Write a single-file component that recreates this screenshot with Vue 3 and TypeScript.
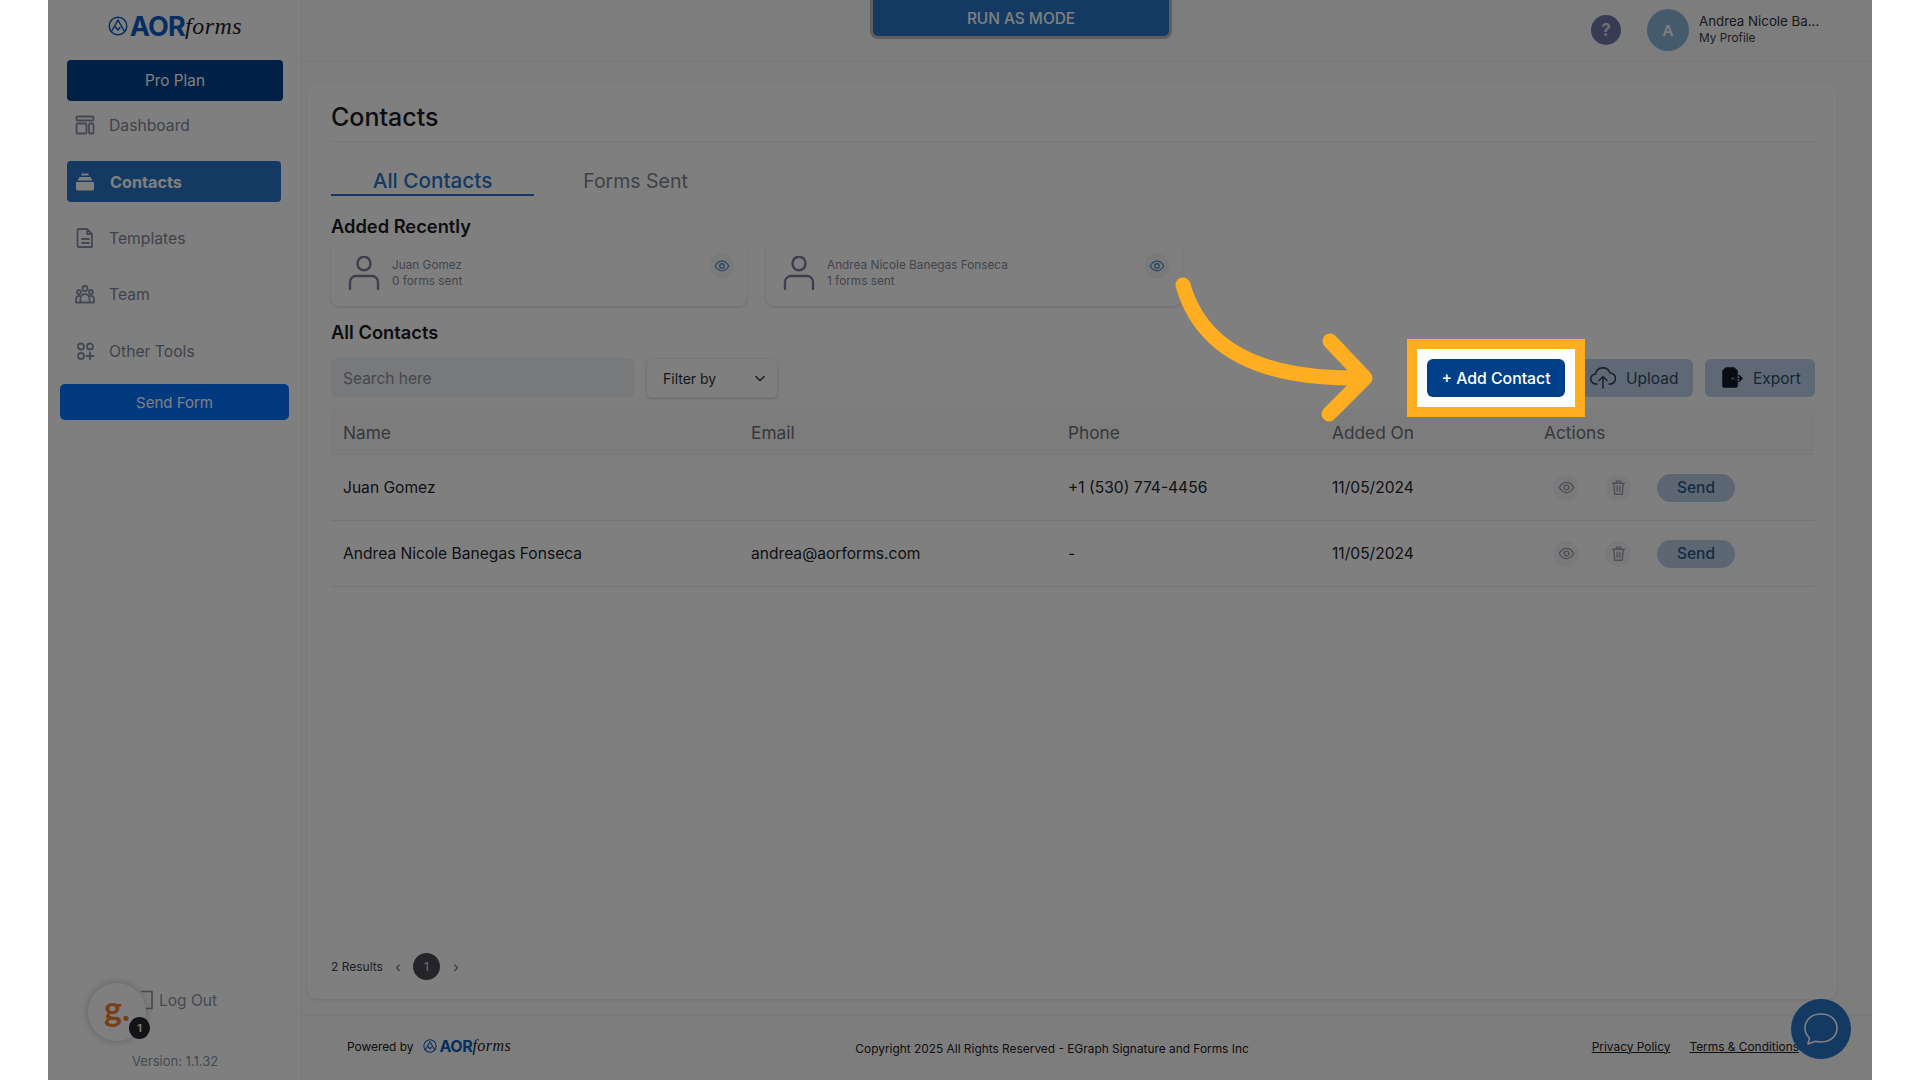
<script setup lang="ts">
interface NavItem {
  label: string
  active?: boolean
  shapes: string
}
interface ContactRow {
  name: string
  email: string
  phone: string
  added: string
}

const nav: NavItem[] = [
  { label: 'Dashboard', shapes: 'M2.500 1.500h15a1 1 0 0 1 1 1v2a1 1 0 0 1-1 1h-15a1 1 0 0 1-1-1v-2a1 1 0 0 1 1-1zM2.500 8.500h8a1 1 0 0 1 1 1v8a1 1 0 0 1-1 1h-8a1 1 0 0 1-1-1v-8a1 1 0 0 1 1-1zM15 8.500h2.500a1 1 0 0 1 1 1v8a1 1 0 0 1-1 1H15a1 1 0 0 1-1-1v-8a1 1 0 0 1 1-1z' },
  { label: 'Contacts', active: true, shapes: '' },
  { label: 'Templates', shapes: 'M4 1h8l5 5v13H4a1.500 1.500 0 0 1-1.500-1.500V2.500A1.500 1.500 0 0 1 4 1zM12 1v5h5M7 11h7M7 15h7' },
  { label: 'Team', shapes: 'M10 3.500m-2.500 0a2.500 2.500 0 1 0 5 0a2.500 2.500 0 1 0-5 0M4 7m-2 0a2 2 0 1 0 4 0a2 2 0 1 0-4 0M16 7m-2 0a2 2 0 1 0 4 0a2 2 0 1 0-4 0M1 17v-3a3 3 0 0 1 4-3M19 17v-3a3 3 0 0 0-4-3M5.500 17v-3.500a4.500 4.500 0 0 1 9 0V17M1 17.500h18' },
  { label: 'Other Tools', shapes: 'M6 5.500m-3 0a3 3 0 1 0 6 0a3 3 0 1 0-6 0M15 5.500m-3 0a3 3 0 1 0 6 0a3 3 0 1 0-6 0M6 15m-3 0a3 3 0 1 0 6 0a3 3 0 1 0-6 0M15 11.500v7M11.500 15h7' },
]

const recent = [
  { name: 'Juan Gomez', sent: '0 forms sent' },
  { name: 'Andrea Nicole Banegas Fonseca', sent: '1 forms sent' },
]

const rows: ContactRow[] = [
  { name: 'Juan Gomez', email: '', phone: '+1 (530) 774-4456', added: '11/05/2024' },
  { name: 'Andrea Nicole Banegas Fonseca', email: 'andrea@aorforms.com', phone: '-', added: '11/05/2024' },
]
</script>

<template>
  <div class="stage">
    <aside class="sidebar">
      <div class="logo">
        <svg class="logo-mark" viewBox="0 0 20 20" width="20" height="20">
          <circle cx="10" cy="10" r="8.800" />
          <path d="M3.500 15.500 10 4l6.500 11.500M7 10.500l3 3.500 2-2.500" />
        </svg>
        <span class="logo-aor">AOR</span><span class="logo-forms">forms</span>
      </div>
      <div class="plan">Pro Plan</div>
      <nav class="nav">
        <div v-for="item in nav" :key="item.label" class="nav-row" :class="{ active: item.active }">
          <svg v-if="item.active" class="nav-icon" viewBox="0 0 20 20" width="20" height="20">
            <path class="solid" d="M6.500 1.500h7v2h-7zM4.500 5h11l2 3.500h-15zM1 10h18v7a1.500 1.500 0 0 1-1.500 1.500h-15A1.500 1.500 0 0 1 1 17z" />
          </svg>
          <svg v-else class="nav-icon" viewBox="0 0 20 20" width="20" height="20">
            <path :d="item.shapes" />
          </svg>
          <span>{{ item.label }}</span>
        </div>
      </nav>
      <div class="send-form">Send Form</div>
      <div class="side-foot">
        <div class="logout">
          <svg viewBox="0 0 12 20" width="12" height="20">
            <path d="M1 1.500h10v17H5" />
          </svg>
          <span>Log Out</span>
        </div>
        <div class="version">Version: 1.1.32</div>
      </div>
    </aside>

    <main class="main">
      <header class="topbar">
        <div class="run-as">RUN AS MODE</div>
        <div class="help">?</div>
        <div class="avatar">A</div>
        <div class="me">
          <div class="me-name">Andrea Nicole Ba...</div>
          <div class="me-link">My Profile</div>
        </div>
      </header>

      <section class="card">
        <h1 class="title">Contacts</h1>
        <div class="tabs">
          <div class="tab on">All Contacts</div>
          <div class="tab">Forms Sent</div>
        </div>

        <h2 class="sub first">Added Recently</h2>
        <div class="recent">
          <div v-for="person in recent" :key="person.name" class="mini">
            <svg class="person" viewBox="0 0 32 34" width="32" height="34">
              <ellipse cx="16" cy="7.500" rx="6.500" ry="6.800" />
              <path d="M2 33v-7a6 6 0 0 1 6-6h16a6 6 0 0 1 6 6v7" />
            </svg>
            <div class="mini-text">
              <div>{{ person.name }}</div>
              <div>{{ person.sent }}</div>
            </div>
            <span class="round eye-blue">
              <svg viewBox="0 0 20 20" width="16" height="16">
                <path d="M1.500 10C4 5.500 7 4 10 4s6 1.500 8.500 6C16 14.500 13 16 10 16s-6-1.500-8.500-6z" />
                <circle cx="10" cy="10" r="2.800" />
              </svg>
            </span>
          </div>
        </div>

        <h2 class="sub second">All Contacts</h2>
        <div class="toolbar">
          <div class="search">Search here</div>
          <div class="filter">
            <span>Filter by</span>
            <svg viewBox="0 0 12 8" width="10" height="7">
              <path d="M1 1.500 6 6.500l5-5" />
            </svg>
          </div>
          <div class="spot"><div class="add">+ Add Contact</div></div>
          <div class="soft upload">
            <svg viewBox="0 0 26 24" width="26" height="24">
              <path d="M7 18H6a5 5 0 0 1-.5-10A7.500 7.500 0 0 1 20 7a5.500 5.500 0 0 1 0 11h-1M13 22V11M9 14.500 13 10.500l4 4" />
            </svg>
            <span>Upload</span>
          </div>
          <div class="soft export">
            <svg viewBox="0 0 22 22" width="22" height="22">
              <path class="solid" d="M5 1h8l3 3v6h-6v3h6v6a1 1 0 0 1-1 1H3a1 1 0 0 1-1-1V4z" />
              <path d="M13 11.500h8M18 8.500l3 3-3 3" />
            </svg>
            <span>Export</span>
          </div>
        </div>

        <div class="grid head">
          <span>Name</span><span>Email</span><span>Phone</span><span>Added On</span><span>Actions</span>
        </div>
        <div v-for="row in rows" :key="row.name" class="grid row">
          <span>{{ row.name }}</span>
          <span>{{ row.email }}</span>
          <span>{{ row.phone }}</span>
          <span>{{ row.added }}</span>
          <div class="actions">
            <span class="round">
              <svg viewBox="0 0 20 20" width="17" height="17">
                <path d="M1.500 10C4 5.500 7 4 10 4s6 1.500 8.500 6C16 14.500 13 16 10 16s-6-1.500-8.500-6z" />
                <circle cx="10" cy="10" r="2.800" />
              </svg>
            </span>
            <span class="round">
              <svg viewBox="0 0 20 20" width="17" height="17">
                <path d="M3 5h14M7.500 5V2.500h5V5M4.500 5l1 13h9l1-13M8.500 8.500v6M11.500 8.500v6" />
              </svg>
            </span>
            <span class="send">Send</span>
          </div>
        </div>

        <div class="pager">
          <span>2 Results</span>
          <span class="chev">‹</span>
          <span class="page">1</span>
          <span class="chev">›</span>
        </div>
      </section>

      <footer class="footer">
        <div class="powered">
          <span>Powered by</span>
          <div class="logo small">
            <svg class="logo-mark" viewBox="0 0 20 20" width="14" height="14">
              <circle cx="10" cy="10" r="8.800" />
              <path d="M3.500 15.500 10 4l6.500 11.500M7 10.500l3 3.500 2-2.500" />
            </svg>
            <span class="logo-aor">AOR</span><span class="logo-forms">forms</span>
          </div>
        </div>
        <div class="copy">Copyright 2025 All Rights Reserved - EGraph Signature and Forms Inc</div>
        <div class="legal">
          <a>Privacy Policy</a>
          <a>Terms &amp; Conditions</a>
        </div>
      </footer>
    </main>

    <div class="g-badge">
      <span class="g-letter">g.</span>
      <span class="g-count">1</span>
    </div>
    <div class="chat">
      <svg viewBox="0 0 36 34" width="36" height="34">
        <path d="M18 2c9 0 16 5.500 16 14s-7 14-16 14c-2 0-4-.3-5.500-.8L5 32l1.500-6C3.500 23.500 2 20 2 16 2 7.500 9 2 18 2z" />
      </svg>
    </div>

    <div class="dim"></div>
    <svg class="arrow" viewBox="0 0 210 160" width="210" height="160">
      <path d="M13 15C30 75 85 110 191 108M160 71l35 37-36 36" />
    </svg>
  </div>
</template>

<style scoped>
.stage {
  position: relative;
  width: 1824px;
  height: 1080px;
  margin: 0 auto;
  display: flex;
  overflow: hidden;
  background: #fff;
  font-family: Inter, "Open Sans", sans-serif;
  color: #1a1a1f;
}
svg {
  fill: none;
  stroke: currentColor;
  stroke-width: 1.6;
  stroke-linecap: round;
  stroke-linejoin: round;
  flex: none;
}
svg .solid {
  fill: currentColor;
}

/* sidebar */
.sidebar {
  width: 254px;
  flex: none;
  box-sizing: border-box;
  padding-left: 19px;
  display: flex;
  flex-direction: column;
  border-right: 1px solid #f0f0f0;
}
.logo {
  height: 60px;
  display: flex;
  align-items: center;
  justify-content: center;
  width: 216px;
  padding-bottom: 8px;
  box-sizing: border-box;
}
.logo-mark {
  color: #0a5ec2;
  margin-right: 2px;
  stroke-width: 1.500;
}
.logo-aor {
  color: #0a5ec2;
  font-size: 27px;
  font-weight: 700;
  letter-spacing: -0.8px;
}
.logo-forms {
  font-family: "Liberation Serif", serif;
  font-style: italic;
  font-size: 24px;
  color: #222;
  letter-spacing: 0.5px;
}
.logo.small {
  width: auto;
  height: 20px;
  padding: 0;
  margin-left: 10px;
}
.logo.small .logo-aor {
  font-size: 16px;
  letter-spacing: -0.4px;
}
.logo.small .logo-forms {
  font-size: 16px;
}
.plan {
  width: 216px;
  height: 41px;
  border-radius: 4px;
  background: #02408c;
  color: #fff;
  font-size: 15.300px;
  display: flex;
  align-items: center;
  justify-content: center;
}
.nav {
  display: flex;
  flex-direction: column;
  gap: 15.5px;
  margin-top: 3.5px;
}
.nav-row {
  width: 214px;
  height: 41px;
  box-sizing: border-box;
  padding-left: 8px;
  display: flex;
  align-items: center;
  gap: 14px;
  border-radius: 4px;
  font-size: 15.700px;
  color: #7e8597;
}
.nav-icon {
  color: #8a91a8;
  stroke-width: 1.800;
}
.nav-row.active {
  background: #2874c6;
  color: #fff;
  font-weight: 700;
  font-size: 16.200px;
  gap: 15px;
}
.nav-row.active .nav-icon {
  color: #fff;
}
.nav-row.active .solid {
  stroke: none;
}
.send-form {
  width: 229px;
  height: 36px;
  margin: 12.5px 0 0 -7px;
  border-radius: 5px;
  background: #0474ff;
  color: #fff;
  font-size: 15px;
  display: flex;
  align-items: center;
  justify-content: center;
}
.side-foot {
  margin-top: auto;
  padding-bottom: 11px;
  display: flex;
  flex-direction: column;
  align-items: center;
  width: 216px;
}
.logout {
  display: flex;
  align-items: center;
  gap: 6px;
  font-size: 15.500px;
  color: #8a92a5;
  margin-left: 8px;
}
.logout svg {
  color: #8a92a5;
}
.version {
  margin-top: 43px;
  font-size: 13px;
  color: #8a92a5;
}

/* main */
.main {
  flex: 1;
  min-width: 0;
  background: #fbfbfb;
  display: flex;
  flex-direction: column;
}
.topbar {
  height: 61px;
  flex: none;
  border-bottom: 1px solid #f0f0f0;
  display: flex;
  align-items: flex-start;
  position: relative;
}
.run-as {
  width: 296px;
  height: 36px;
  margin-left: 568px;
  border: 3px solid #bdbdbd;
  border-top: 0;
  border-radius: 0 0 8px 8px;
  background: #2874c6;
  color: #fff;
  font-size: 15.400px;
  font-weight: 500;
  display: flex;
  align-items: center;
  justify-content: center;
}
.help {
  width: 30px;
  height: 30px;
  margin: 15px 0 0 419px;
  border-radius: 50%;
  background: #6f79a8;
  color: #ddd;
  font-size: 17px;
  font-weight: 700;
  display: flex;
  align-items: center;
  justify-content: center;
}
.avatar {
  width: 42px;
  height: 42px;
  margin: 9px 0 0 26px;
  border-radius: 50%;
  background: #8cb4dd;
  color: #fff;
  font-size: 15px;
  font-weight: 600;
  display: flex;
  align-items: center;
  justify-content: center;
}
.me {
  margin: 12px 0 0 10px;
}
.me-name {
  font-size: 13.300px;
  color: #2f3140;
  line-height: 18px;
}
.me-link {
  font-size: 11.800px;
  color: #3a3c4a;
  line-height: 17px;
}
.card {
  width: 1530px;
  height: 916px;
  margin: 21px 0 0 5px;
  flex: none;
  box-sizing: border-box;
  padding: 0 22px 0 24px;
  background: #fff;
  border-radius: 10px;
  box-shadow: 0 1px 3px rgba(0, 0, 0, 0.1);
  display: flex;
  flex-direction: column;
}
.title {
  margin: 0;
  height: 59px;
  box-sizing: border-box;
  padding-top: 18px;
  font-size: 25px;
  line-height: 32px;
  font-weight: 500;
  border-bottom: 1px solid #eee;
}
.tabs {
  display: flex;
  margin-top: 21px;
  height: 33px;
}
.tab {
  width: 203px;
  text-align: center;
  font-size: 19.500px;
  line-height: 36px;
  color: #7d8290;
  margin-right: -5px;
  white-space: nowrap;
}
.tab.on {
  width: 203px;
  color: #2874c6;
  font-size: 20.700px;
  font-weight: 500;
  border-bottom: 2px solid #2874c6;
  margin-right: 0;
}
.sub {
  margin: 0;
  font-size: 18.300px;
  line-height: 22px;
  font-weight: 600;
}
.sub.first {
  margin-top: 19px;
}
.sub.second {
  margin-top: 14.500px;
}
.recent {
  display: flex;
  gap: 19px;
  margin-top: 5px;
}
.mini {
  width: 416px;
  height: 64px;
  box-sizing: border-box;
  padding: 15px 13px 0 17px;
  display: flex;
  align-items: flex-start;
  border-radius: 8px;
  box-shadow: 0 1px 3px rgba(0, 0, 0, 0.16);
}
.person {
  color: #7b8098;
  margin-top: -1px;
  stroke-width: 2.400;
}
.mini-text {
  flex: 1;
  margin-left: 12px;
  font-size: 11.800px;
  line-height: 16px;
  color: #878b99;
}
.round {
  width: 26px;
  height: 26px;
  border-radius: 50%;
  background: #f4f4f6;
  color: #9ba0b0;
  display: inline-flex;
  align-items: center;
  justify-content: center;
}
.eye-blue {
  width: 24px;
  color: #4f8fcb;
  margin: -4px 0 0;
}
.toolbar {
  display: flex;
  align-items: center;
  margin-top: 15.500px;
  height: 40px;
}
.search {
  width: 303px;
  height: 40px;
  box-sizing: border-box;
  padding-left: 12px;
  border-radius: 6px;
  background: #f0f2f5;
  color: #8c909c;
  font-size: 15.500px;
  line-height: 41px;
}
.filter {
  width: 132px;
  height: 40px;
  margin-left: 12px;
  box-sizing: border-box;
  padding: 0 12px 0 16px;
  border: 1px solid #eee;
  border-radius: 5px;
  box-shadow: 0 1px 2px rgba(0, 0, 0, 0.16);
  display: flex;
  align-items: center;
  justify-content: space-between;
  font-size: 14px;
  color: #2d2f38;
}
.spot {
  position: relative;
  z-index: 12;
  margin-left: auto;
  width: 138px;
  height: 38px;
}
.spot::before {
  content: "";
  position: absolute;
  inset: -20px;
  z-index: -1;
  background: #fff;
  border: 10px solid #ffae21;
}
.add {
  height: 38px;
  border-radius: 6px;
  background: #014089;
  color: #fff;
  font-size: 15.800px;
  font-weight: 500;
  line-height: 39px;
  text-align: center;
}
.soft {
  height: 38px;
  box-sizing: border-box;
  border-radius: 6px;
  background: #bcd3ea;
  font-size: 15.500px;
  display: flex;
  align-items: center;
}
.upload {
  width: 118px;
  margin-left: 10px;
  padding-left: 15px;
  gap: 10px;
  color: #2e4a68;
}
.upload svg {
  color: #33445a;
}
.export {
  width: 110px;
  margin-left: 12px;
  padding-left: 16px;
  gap: 10px;
  color: #2e4a68;
}
.export svg {
  color: #101a28;
}
.grid {
  display: grid;
  grid-template-columns: 408px 317px 264px 212px 1fr;
  padding: 0 12px;
  align-items: center;
}
.head {
  margin-top: 11px;
  height: 46px;
  box-sizing: border-box;
  padding-top: 2px;
  background: #f8f8f8;
  color: #6e7079;
  font-size: 17.300px;
  border-bottom: 1px solid #efefef;
}
.row {
  height: 65px;
  border-bottom: 1px solid #e8e8e8;
  font-size: 15.600px;
  color: #24252b;
}
.actions {
  display: flex;
  align-items: center;
  gap: 26px;
  margin-left: 9px;
}
.send {
  width: 78px;
  height: 28px;
  border-radius: 14px;
  background: #b8cee6;
  color: #2a5785;
  text-align: center;
  line-height: 28px;
  font-size: 15.500px;
  font-weight: 500;
}
.pager {
  margin-top: auto;
  margin-bottom: 19px;
  display: flex;
  align-items: center;
  height: 27px;
  font-size: 12px;
  color: #3d3f4b;
}
.chev {
  width: 10px;
  text-align: center;
  margin-left: 10px;
  font-size: 14px;
  color: #666a78;
}
.page {
  width: 27px;
  height: 27px;
  margin-left: 10px;
  margin-right: 1px;
  border-radius: 50%;
  background: #4a4a52;
  color: #ddd;
  text-align: center;
  line-height: 27px;
}
.footer {
  margin-top: 16px;
  height: 60px;
  border-top: 1px solid #efefef;
  display: flex;
  align-items: center;
  position: relative;
  font-size: 11.900px;
  color: #1f2026;
}
.powered {
  display: flex;
  align-items: center;
  margin-left: 45px;
}
.copy {
  margin-left: 344px;
  padding-top: 5px;
  white-space: nowrap;
}
.legal {
  display: flex;
  gap: 19px;
  margin-left: auto;
  margin-right: 73px;
  white-space: nowrap;
}
.legal a {
  text-decoration: underline;
}

/* floating widgets */
.g-badge {
  position: absolute;
  left: 40px;
  top: 983px;
  width: 58px;
  height: 58px;
  border-radius: 50%;
  background: #fff;
  box-shadow: 0 0 8px rgba(0, 0, 0, 0.25);
  display: flex;
  align-items: center;
  justify-content: center;
}
.g-letter {
  font-family: "Lato", sans-serif;
  font-size: 34px;
  font-weight: 700;
  color: #f07c2e;
  margin-top: -10px;
}
.g-count {
  position: absolute;
  right: -4px;
  bottom: 2px;
  width: 21px;
  height: 22px;
  border-radius: 50%;
  background: #26262e;
  color: #fff;
  font-size: 11px;
  font-weight: 600;
  text-align: center;
  line-height: 22px;
}
.chat {
  position: absolute;
  left: 1743px;
  top: 999px;
  width: 60px;
  height: 60px;
  border-radius: 50%;
  background: #2874c6;
  color: #fff;
  display: flex;
  align-items: center;
  justify-content: center;
}
.dim {
  position: absolute;
  inset: 0;
  z-index: 10;
  background: rgba(0, 0, 0, 0.5);
}
.arrow {
  position: absolute;
  left: 1122px;
  top: 270px;
  z-index: 11;
  color: #ffae21;
  stroke-width: 15;
}
</style>

<style>
html,
body {
  margin: 0;
  background: #fff;
}
</style>
